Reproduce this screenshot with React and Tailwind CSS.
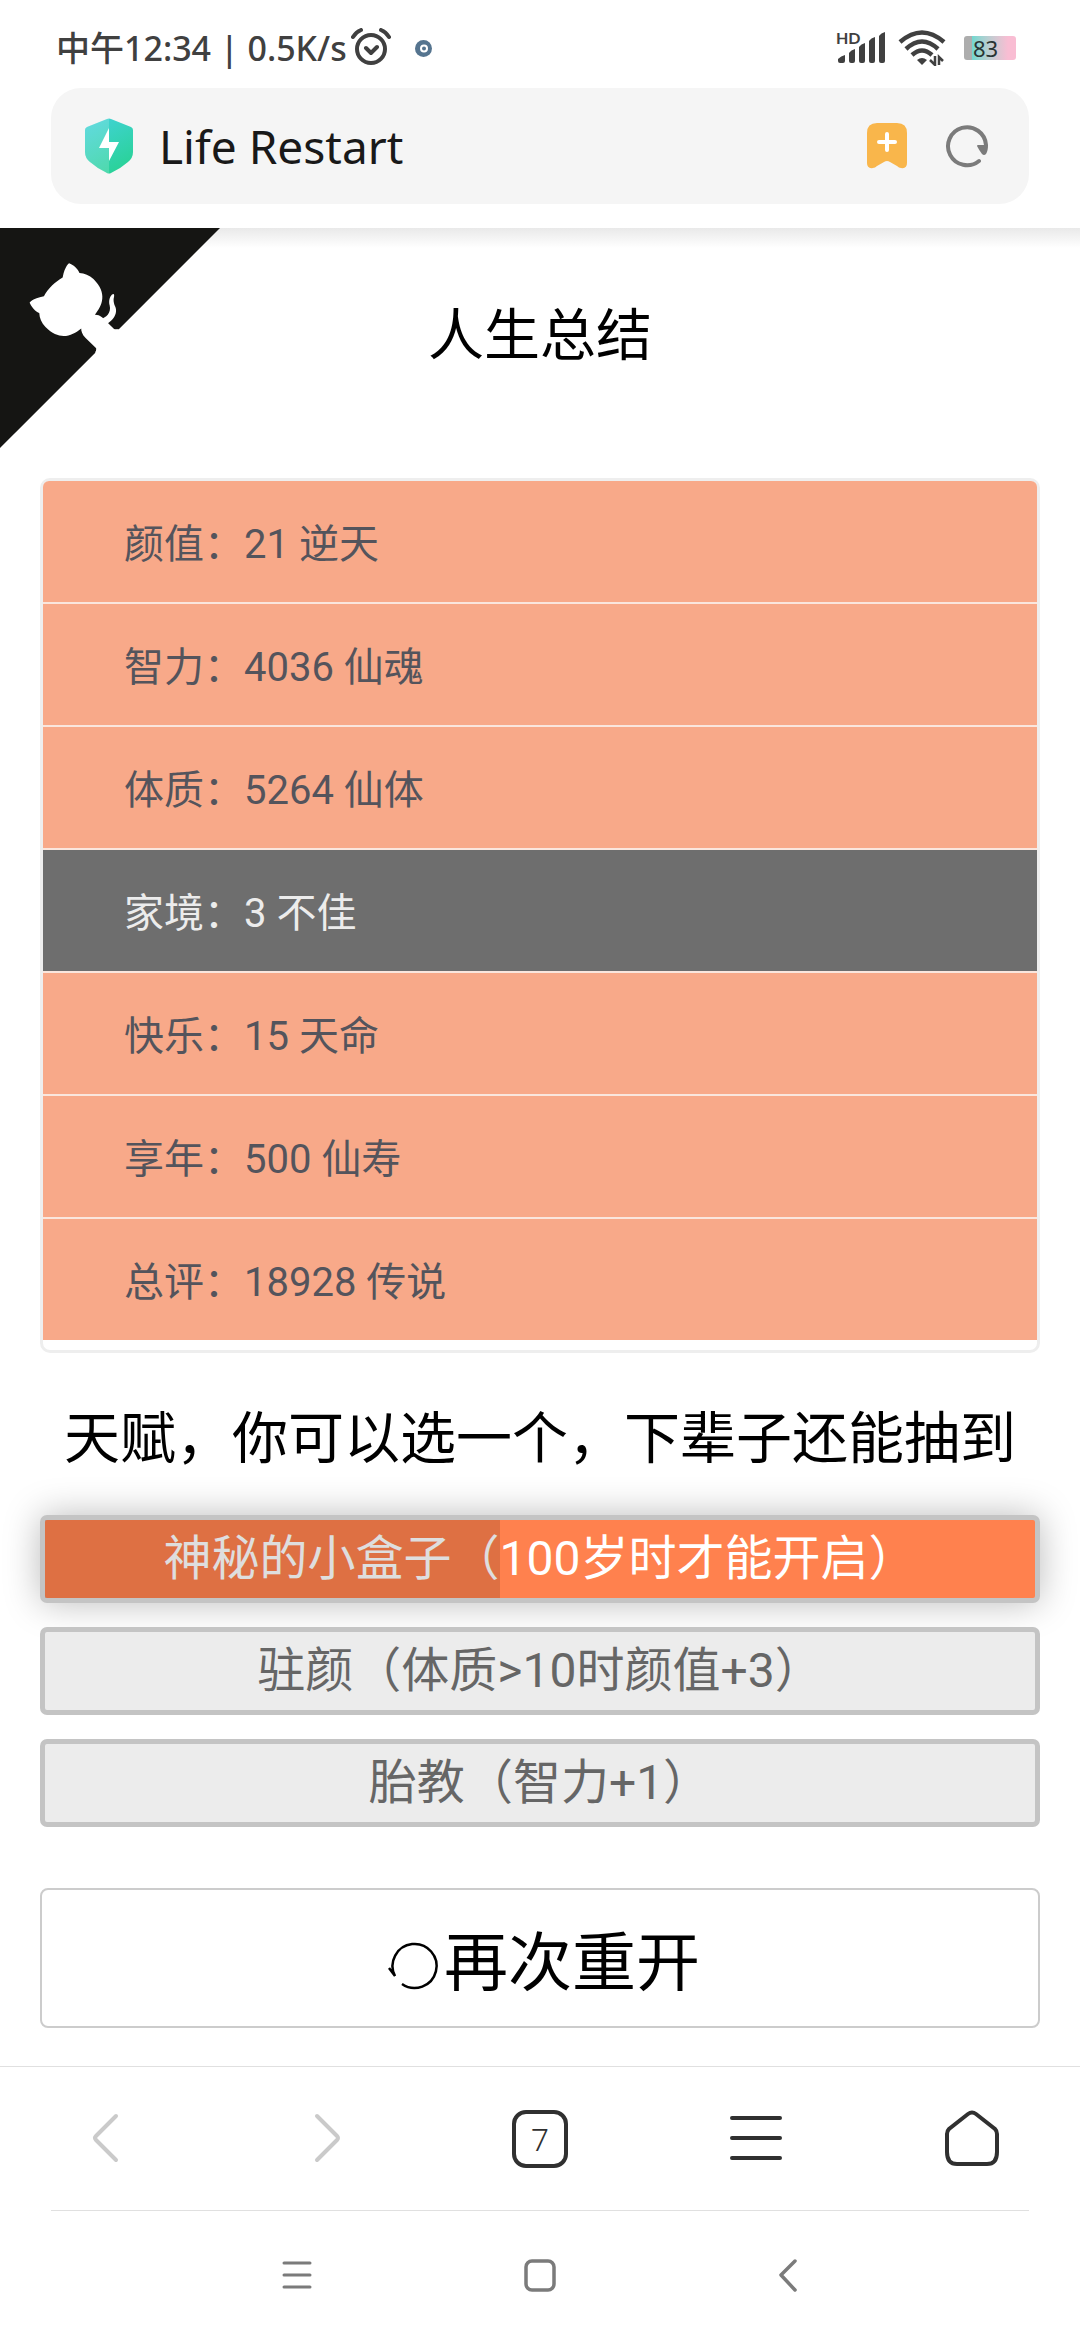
import { useState } from 'react'
import clsx from 'clsx'

const STATS = [
  { label: '颜值', value: 21, judge: '逆天' },
  { label: '智力', value: 4036, judge: '仙魂' },
  { label: '体质', value: 5264, judge: '仙体' },
  { label: '家境', value: 3, judge: '不佳', poor: true },
  { label: '快乐', value: 15, judge: '天命' },
  { label: '享年', value: 500, judge: '仙寿' },
  { label: '总评', value: 18928, judge: '传说' },
]

const TALENTS = [
  { id: 1, name: '神秘的小盒子', description: '100岁时才能开启' },
  { id: 2, name: '驻颜', description: '体质>10时颜值+3' },
  { id: 3, name: '胎教', description: '智力+1' },
]

function StatusBar() {
  return (
    <div className="flex h-[88px] items-center justify-between pt-2 pr-16 pl-14 text-[#404040]">
      <div className="flex items-center">
        <span className="font-['Noto_Sans','Noto_Sans_CJK_SC',sans-serif] text-[34px] leading-10 font-medium">
          中午12:34 | 0.5K/s
        </span>
        <svg className="ml-1 h-10 w-10" viewBox="0 0 40 40" fill="none" stroke="currentColor" strokeWidth="4" strokeLinecap="round" strokeLinejoin="round">
          <circle cx="20" cy="21" r="14" />
          <path d="M15 20l5 5 6-6M2 9Q5 4 10 2M30 2Q35 4 38 9" />
        </svg>
        <svg className="ml-6 h-[17px] w-[17px]" viewBox="0 0 17 17">
          <circle cx="8.5" cy="8.5" r="8.5" fill="#55748f" />
          <circle cx="9" cy="8.5" r="3" fill="none" stroke="#fff" strokeWidth="2" />
        </svg>
      </div>
      <div className="flex items-center">
        <div className="relative">
          <svg className="h-8 w-[50px]" viewBox="0 0 50 32" fill="currentColor">
            <path d="M2 27q3-3 7-4v6q0 2-2 2H4q-2 0-2-2zM13 21q2-3 6-4v12q0 2-2 2h-2q-2 0-2-2zM23 15q2-3 6-4v18q0 2-2 2h-2q-2 0-2-2zM33 9q2-3 6-4v24q0 2-2 2h-2q-2 0-2-2zM43 4q2-3 6-4v29q0 2-2 2h-2q-2 0-2-2z" />
          </svg>
          <span className="absolute -top-1 left-0 font-[Lato,sans-serif] text-[16px] leading-5 font-bold">
            HD
          </span>
        </div>
        <svg className="ml-3 h-9 w-12" viewBox="0 0 48 36" fill="none" stroke="currentColor" strokeWidth="4.5">
          <path d="M2 12Q24-7 46 12M8 19Q24 4 40 19M14 25Q24 16 34 25" />
          <path d="M19 30q5-4 10 0l-5 5z" fill="currentColor" stroke="none" />
          <path d="M37 26v9l-5-5M41 35v-8l4 4" strokeWidth="2.5" />
        </svg>
        <div className="ml-[18px] flex h-6 w-[52px] items-center rounded-[3px] bg-linear-to-r from-[#adadad] from-15% via-[#6fd8d0] via-15% to-[#f9bdd3] to-85% pl-[9px] font-['Noto_Sans',sans-serif] text-[22px] leading-6 text-[#2a3434]">
          83
        </div>
      </div>
    </div>
  )
}

function AddressBar() {
  return (
    <div className="mx-[51px] mb-6 flex h-[116px] items-center rounded-[30px] bg-[#f5f5f5] pr-10 pl-[34px]">
      <svg className="h-14 w-12" viewBox="0 0 48 56">
        <defs>
          <linearGradient id="shield" x1="0" y1="0" x2="0.5" y2="1">
            <stop offset="0" stopColor="#43d3dc" />
            <stop offset="1" stopColor="#2bd29b" />
          </linearGradient>
        </defs>
        <path d="M22 1q2-1 4 0l20 8q2 1 2 3v22q0 6-5 10-8 7-17 11-2 1-4 0-9-4-17-11-5-4-5-10V12q0-2 2-3z" fill="url(#shield)" />
        <path d="M24 0L2 9q-2 1-2 3v22q0 6 5 10 8 7 19 12z" fill="#fff" fillOpacity="0.17" />
        <path d="M24 10L14 30h10v13l10-19H24z" fill="#fff" />
      </svg>
      <input
        aria-label="地址栏"
        defaultValue="Life Restart"
        className="ml-[26px] min-w-0 flex-1 bg-transparent font-['Noto_Sans',sans-serif] text-[46px] leading-[60px] text-[#191919] outline-none"
      />
      <button aria-label="添加书签">
        <svg className="h-[46px] w-10" viewBox="0 0 40 46">
          <path d="M10 0h20q10 0 10 10v30q0 6-6 5-2 0-4-2l-7-4q-3-2-6 0l-7 4q-2 2-4 2-6 1-6-5V10Q0 0 10 0z" fill="#f9b64b" />
          <path d="M20 11v16M12 19h16" stroke="#fff" strokeWidth="4" strokeLinecap="round" />
        </svg>
      </button>
      <button aria-label="刷新" className="ml-[38px]">
        <svg className="h-11 w-11" viewBox="0 0 44 44">
          <path d="M34 37A19 19 0 1 1 41 21" fill="none" stroke="#7b7b7b" strokeWidth="4" strokeLinecap="round" />
          <path d="M33 21h10q0 6-2 9-2 2-4 0-3-4-5-8 0-1 1-1z" fill="#7b7b7b" />
        </svg>
      </button>
    </div>
  )
}

function GithubCorner() {
  return (
    <a href="#github" aria-label="GitHub" className="absolute top-0 left-0">
      <svg className="h-[220px] w-[220px] -scale-x-100" viewBox="0 0 250 250">
        <path d="M0,0 L115,115 L130,115 L142,142 L250,250 L250,0 Z" fill="#151513" />
        <path
          d="M128.3,109.0 C113.8,99.7 119.0,89.6 119.0,89.6 C122.0,82.7 120.5,78.6 120.5,78.6 C119.2,72.0 123.4,76.3 123.4,76.3 C127.3,80.9 125.5,87.3 125.5,87.3 C122.9,97.6 130.6,101.9 134.4,103.2"
          fill="#fff"
        />
        <path
          d="M115.0,115.0 C114.9,115.1 118.7,116.5 119.8,115.4 L133.7,101.6 C136.9,99.2 139.9,98.4 142.2,98.6 C133.8,88.0 127.5,74.4 143.8,58.0 C148.5,53.4 154.0,51.2 159.7,51.0 C160.3,49.4 163.2,43.6 171.4,40.1 C171.4,40.1 176.1,42.5 178.8,56.2 C183.1,58.6 187.2,61.8 190.9,65.4 C194.5,69.0 197.7,73.2 200.1,77.6 C213.8,80.2 216.3,84.9 216.3,84.9 C212.7,93.1 206.9,96.0 205.4,96.6 C205.1,102.4 203.0,107.8 198.3,112.5 C181.9,128.9 168.3,122.5 157.7,114.1 C157.9,116.9 156.7,120.9 152.7,124.9 L141.0,136.5 C139.8,137.7 141.6,141.9 141.8,141.8 Z"
          fill="#fff"
        />
      </svg>
    </a>
  )
}

function StatList() {
  return (
    <ul className="divide-y-2 divide-[#fae6dd] rounded-[10px] border-[3px] border-[#eee] pb-[10px]">
      {STATS.map((stat) => (
        <li
          key={stat.label}
          className={clsx(
            'px-[81px] pt-[34px] pb-[27px] text-[40px] leading-[60px] first:rounded-t-md',
            stat.poor ? 'bg-[#6e6e6e] text-[#ececec]' : 'bg-[#f8a989] text-[#54545c]',
          )}
        >
          {stat.label}：{stat.value} {stat.judge}
        </li>
      ))}
    </ul>
  )
}

function TalentList({ selected, onSelect }) {
  return (
    <div className="flex flex-col gap-6">
      {TALENTS.map((talent) => {
        const active = talent.id === selected
        return (
          <button
            key={talent.id}
            onClick={() => onSelect(talent.id)}
            aria-pressed={active}
            className={clsx(
              'relative h-[88px] rounded-[7px] border-[5px] border-[#c4c4c4] text-[48px] leading-[72px]',
              active
                ? 'bg-[#ff814e] text-white shadow-[0_0_36px_rgba(0,0,0,0.27)]'
                : 'bg-[#ececec] text-[#666]',
            )}
          >
            {talent.name}（{talent.description}）
            {active && <span className="absolute inset-y-0 left-0 w-[46%] bg-black/13" />}
          </button>
        )
      })}
    </div>
  )
}

function Toolbar() {
  return (
    <nav className="grid h-36 grid-cols-5 items-center justify-items-center border-t border-[#e0e0e0] text-[#303030]">
      <button aria-label="后退" className="text-[#cacaca]">
        <svg className="h-[60px] w-[60px]" viewBox="0 0 60 60" fill="none" stroke="currentColor" strokeWidth="4" strokeLinecap="round">
          <path d="M38 7L18 27q-2 2 0 4l20 20" />
        </svg>
      </button>
      <button aria-label="前进" className="text-[#cacaca]">
        <svg className="h-[60px] w-[60px]" viewBox="0 0 60 60" fill="none" stroke="currentColor" strokeWidth="4" strokeLinecap="round">
          <path d="M23 7L43 27q2 2 0 4L23 51" />
        </svg>
      </button>
      <button
        aria-label="标签页"
        className="flex h-[58px] w-14 items-center justify-center rounded-[14px] border-4 border-current font-['Noto_Sans',sans-serif] text-[32px] leading-10 font-light"
      >
        7
      </button>
      <button aria-label="菜单">
        <svg className="h-[60px] w-[60px]" viewBox="0 0 60 60" stroke="currentColor" strokeWidth="4" strokeLinecap="round">
          <path d="M6 9h48M6 29h48M6 49h48" />
        </svg>
      </button>
      <button aria-label="主页">
        <svg className="h-[60px] w-[60px]" viewBox="0 0 60 60" fill="none" stroke="currentColor" strokeWidth="4">
          <path d="M26 5q4-3 8 0l19 15q2 2 2 5v18q0 12-10 12H15Q5 55 5 43V25q0-3 2-5z" />
        </svg>
      </button>
    </nav>
  )
}

function SystemNav() {
  return (
    <div className="mx-[51px] grid h-[130px] grid-cols-3 items-center justify-items-center border-t border-[#e0e0e0] px-[124px] text-[#7b7b7b]">
      <button aria-label="最近任务">
        <svg className="h-12 w-12" viewBox="0 0 48 48" stroke="currentColor" strokeWidth="3" strokeLinecap="round">
          <path d="M11 11h26M11 23h26M11 35h26" />
        </svg>
      </button>
      <button aria-label="桌面">
        <svg className="h-12 w-12" viewBox="0 0 48 48" fill="none" stroke="currentColor" strokeWidth="3.5">
          <rect x="10" y="9" width="28" height="29" rx="6" />
        </svg>
      </button>
      <button aria-label="返回">
        <svg className="h-12 w-12" viewBox="0 0 48 48" fill="none" stroke="currentColor" strokeWidth="3.5" strokeLinecap="round" strokeLinejoin="round">
          <path d="M36 9L22 23l14 15" />
        </svg>
      </button>
    </div>
  )
}

export default function App() {
  const [selected, setSelected] = useState(1)

  return (
    <div className="flex min-h-screen flex-col bg-white font-[Roboto,'Noto_Sans_CJK_SC',sans-serif]">
      <header>
        <StatusBar />
        <AddressBar />
      </header>
      <main className="relative flex-1 bg-linear-to-b from-[#e9e9e9] to-white to-[20px] px-10 text-black">
        <GithubCorner />
        <h1 className="pt-[66px] pb-[100px] text-center text-[56px] leading-[84px]">人生总结</h1>
        <StatList />
        <h2 className="pt-11 pb-[34px] text-center text-[56px] leading-[84px]">
          天赋，你可以选一个，下辈子还能抽到
        </h2>
        <TalentList selected={selected} onSelect={setSelected} />
        <button className="mt-[61px] mb-[38px] flex h-[140px] w-full items-center justify-center rounded-lg border-2 border-[#ccc] pt-3 text-[64px] leading-[96px]">
          <svg className="h-16 w-16" viewBox="0 0 64 64" fill="none" stroke="currentColor" strokeWidth="2.5">
            <path d="M22 52A22 22 0 1 0 15 44L9 36" />
          </svg>
          再次重开
        </button>
      </main>
      <Toolbar />
      <SystemNav />
    </div>
  )
}
